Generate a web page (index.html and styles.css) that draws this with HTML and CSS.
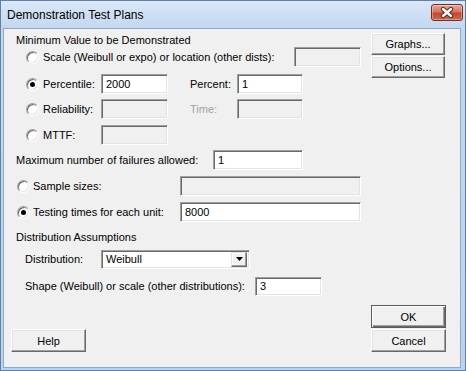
FILE: index.html
```html
<!DOCTYPE html>
<html lang="en">
<head>
    <meta charset="UTF-8">
    <title>Demonstration Test Plans</title>
    <link rel="stylesheet" href="styles.css">
</head>
<body>

    <div class="window">
        <div class="titlebar">
            <span class="title">Demonstration Test Plans</span>
            <button class="close">
                <svg width="30" height="15" viewBox="0 0 30 15">
                    <path d="M11 4 L19 11 M19 4 L11 11" stroke="#5b2a20" stroke-width="4.4" stroke-linecap="round"/>
                    <path d="M11 4 L19 11 M19 4 L11 11" stroke="#fff" stroke-width="2.4" stroke-linecap="round"/>
                </svg>
            </button>
        </div>

        <div class="client">
            <div class="top">
                <div class="form">
                    <div class="heading">Minimum Value to be Demonstrated</div>

                    <div class="row">
                        <span class="radio"></span>
                        <span class="label lbl-scale">Scale (Weibull or expo) or location (other dists):</span>
                        <span class="field disabled w-67"></span>
                    </div>

                    <div class="row gap-7">
                        <span class="radio on"></span>
                        <span class="label lbl-opt">Percentile:</span>
                        <span class="field w-67">2000</span>
                        <span class="label lbl-pct">Percent:</span>
                        <span class="field w-66">1</span>
                    </div>

                    <div class="row gap-5">
                        <span class="radio"></span>
                        <span class="label lbl-opt">Reliability:</span>
                        <span class="field disabled w-67"></span>
                        <span class="label lbl-pct greyed">Time:</span>
                        <span class="field disabled w-66"></span>
                    </div>

                    <div class="row gap-6">
                        <span class="radio"></span>
                        <span class="label lbl-opt">MTTF:</span>
                        <span class="field disabled w-67"></span>
                    </div>

                    <div class="row gap-5">
                        <span class="label lbl-max">Maximum number of failures allowed:</span>
                        <span class="field w-90">1</span>
                    </div>

                    <div class="row gap-6">
                        <span class="radio left"></span>
                        <span class="label lbl-sample">Sample sizes:</span>
                        <span class="field disabled w-181"></span>
                    </div>

                    <div class="row gap-6">
                        <span class="radio left on"></span>
                        <span class="label lbl-sample">Testing times for each unit:</span>
                        <span class="field w-181">8000</span>
                    </div>

                    <div class="heading gap-8">Distribution Assumptions</div>

                    <div class="row gap-5">
                        <span class="label lbl-dist">Distribution:</span>
                        <span class="field combo">
                            <span>Weibull</span>
                            <span class="drop">
                                <svg width="7" height="4" viewBox="0 0 7 4"><path d="M0 0 H7 L3.5 4 Z" fill="#000"/></svg>
                            </span>
                        </span>
                    </div>

                    <div class="row gap-7">
                        <span class="label lbl-shape">Shape (Weibull) or scale (other distributions):</span>
                        <span class="field w-67 short">3</span>
                    </div>
                </div>

                <div class="side">
                    <button class="btn">Graphs...</button>
                    <button class="btn">Options...</button>
                </div>
            </div>

            <div class="bottom">
                <button class="btn wide">Help</button>
                <div class="side end">
                    <button class="btn wide default">OK</button>
                    <button class="btn wide">Cancel</button>
                </div>
            </div>
        </div>
    </div>

</body>
</html>
```

FILE: styles.css
```css
* {
    box-sizing: border-box;
}

body {
    margin: 0;
    font-family: "Liberation Sans", Arial, sans-serif;
    font-size: 11px;
    color: #000;
}

.window {
    width: 466px;
    height: 371px;
    display: flex;
    flex-direction: column;
    padding: 0 5px 3px 3px;
    border: 1px solid #5f80a8;
    background: linear-gradient(#dae7f7, #c2d7f0 28px, #bdd3ed);
}

.titlebar {
    height: 28px;
    display: flex;
    justify-content: space-between;
}

.title {
    padding: 7px 0 0 3px;
    font-size: 12px;
}

.close {
    width: 32px;
    height: 17px;
    margin: 3px -3px 0 0;
    padding: 0;
    display: flex;
    align-items: center;
    justify-content: center;
    border: 1px solid #6e2e22;
    border-radius: 3px;
    background: linear-gradient(#eaa899, #d6735f 45%, #c4472f 55%, #d0664a);
    box-shadow: inset 0 0 0 1px rgba(255, 255, 255, 0.35);
}

.client {
    flex: 1;
    display: flex;
    flex-direction: column;
    padding: 4px 14px 15px 0;
    background: #f0f0f0;
    box-shadow: 0 0 0 1px #92a9c6;
}

.top {
    display: flex;
}

.form {
    width: 362px;
}

.side {
    display: flex;
    flex-direction: column;
    gap: 1px;
    margin-left: 5px;
}

.heading {
    line-height: 14px;
    padding-left: 12px;
}

.row {
    height: 20px;
    display: flex;
    align-items: center;
}

.gap-5 { margin-top: 5px; }
.gap-6 { margin-top: 6px; }
.gap-7 { margin-top: 7px; }
.gap-8 { margin-top: 8px; }

.label {
    flex-shrink: 0;
    white-space: nowrap;
}

.greyed {
    color: #a0a0a0;
}

.lbl-scale { width: 251px; }
.lbl-opt { width: 58px; }
.lbl-pct { width: 47px; margin-left: 22px; }
.lbl-max { width: 197px; margin-left: 12px; }
.lbl-sample { width: 147px; }
.lbl-dist { width: 76px; margin-left: 21px; }
.lbl-shape { width: 230px; margin-left: 21px; }

.radio {
    width: 13px;
    height: 13px;
    margin: 0 4px 0 22px;
    flex-shrink: 0;
    display: flex;
    align-items: center;
    justify-content: center;
    border-radius: 50%;
    background: #fff;
    border: 1px solid;
    border-color: #a0a0a0 #fff #fff #a0a0a0;
    box-shadow: inset 1px 1px #696969, inset -1px -1px #e3e3e3;
}

.radio.left {
    margin: 0 3px 0 13px;
}

.radio.on::after {
    content: "";
    width: 5px;
    height: 5px;
    border-radius: 50%;
    background: #000;
}

.field {
    height: 20px;
    flex-shrink: 0;
    display: flex;
    align-items: center;
    padding-left: 4px;
    background: #fff;
    border: 1px solid;
    border-color: #a0a0a0 #fff #fff #a0a0a0;
    box-shadow: inset 1px 1px #696969, inset -1px -1px #e3e3e3;
}

.field.disabled {
    background: #f0f0f0;
}

.field.short {
    height: 19px;
}

.w-66 { width: 66px; }
.w-67 { width: 67px; }
.w-90 { width: 90px; }
.w-181 { width: 181px; }

.combo {
    width: 149px;
    height: 19px;
    justify-content: space-between;
    padding: 2px 2px 2px 4px;
}

.drop {
    width: 16px;
    height: 15px;
    display: flex;
    align-items: center;
    justify-content: center;
    background: #f0f0f0;
    border: 1px solid;
    border-color: #e3e3e3 #696969 #696969 #e3e3e3;
    box-shadow: inset -1px -1px #a0a0a0, inset 1px 1px #fff;
}

.btn {
    width: 74px;
    height: 22px;
    padding: 0;
    font: inherit;
    color: #000;
    background: #f0f0f0;
    border: 1px solid;
    border-color: #fff #696969 #696969 #fff;
    box-shadow: inset -1px -1px #a0a0a0, inset 1px 1px #e3e3e3;
}

.btn.wide {
    width: 75px;
    height: 23px;
}

.btn.default {
    border-color: #5a5a5a;
    box-shadow: inset 1px 1px #fff, inset -1px -1px #696969, inset -2px -2px #a0a0a0;
}

.bottom {
    margin-top: auto;
    display: flex;
    justify-content: space-between;
    align-items: flex-end;
    padding-left: 7px;
}

.side.end {
    margin-left: 0;
}
```
